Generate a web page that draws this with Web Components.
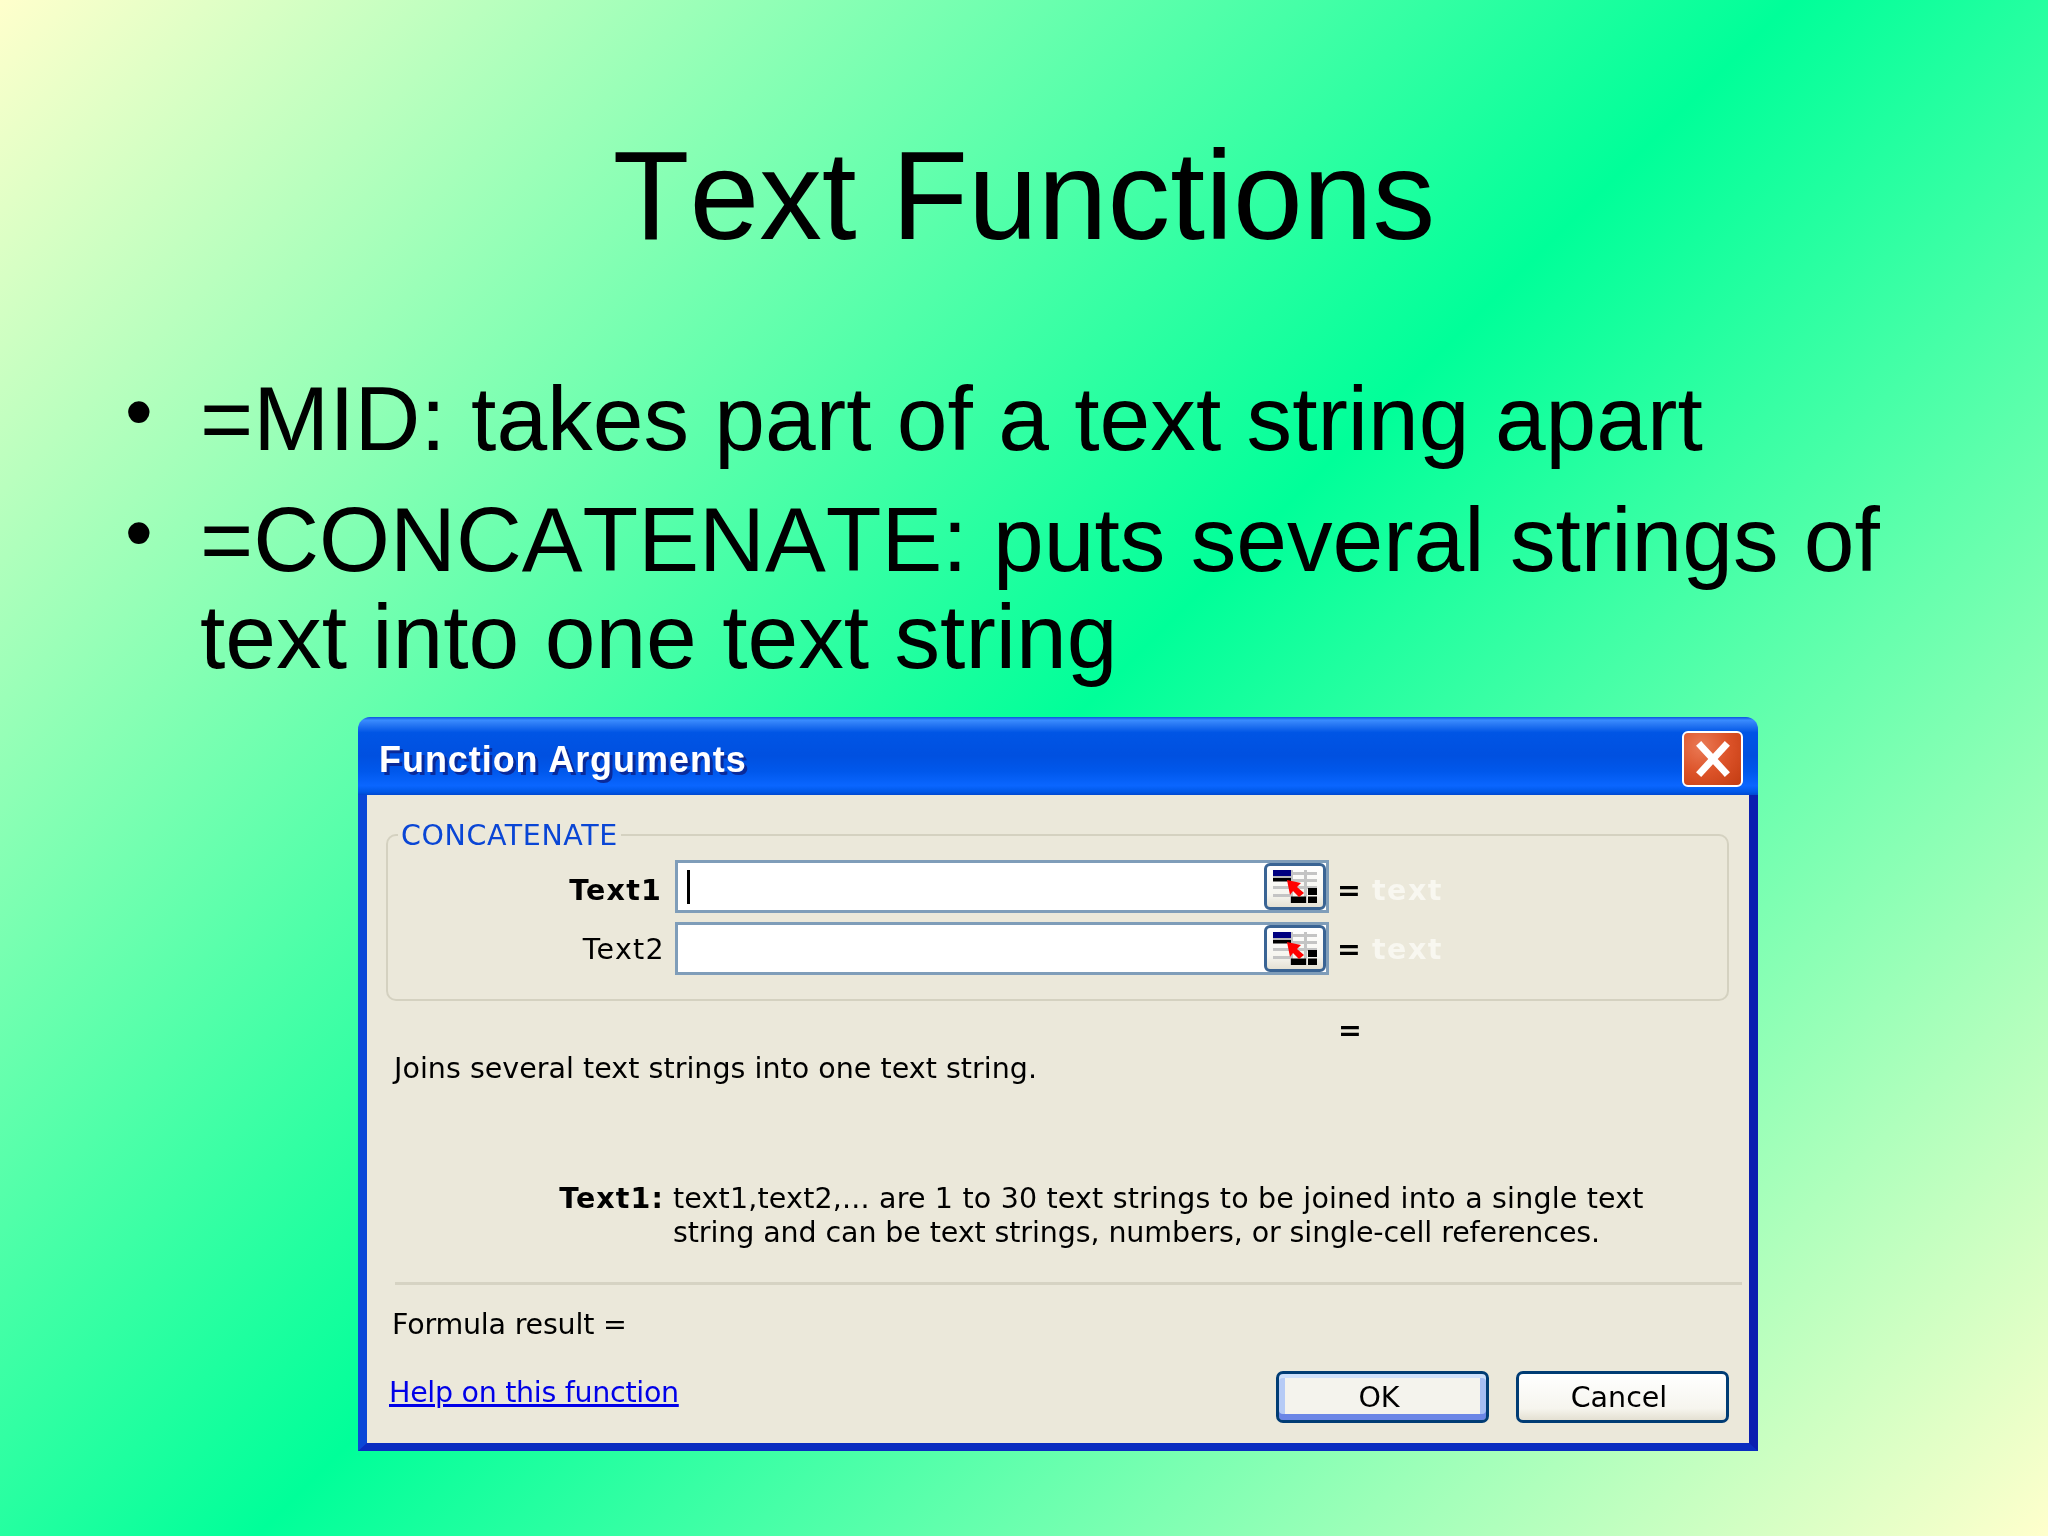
<!DOCTYPE html>
<html>
<head>
<meta charset="utf-8">
<title>Text Functions</title>
<style>
    html, body { margin: 0; padding: 0; }
</style>
</head>
<body>
<text-slide>
    <span slot="title">Text Functions</span>
    <slide-bullet>=MID: takes part of a text string apart</slide-bullet>
    <slide-bullet>=CONCATENATE: puts several strings of text into one text string</slide-bullet>
    <xp-dialog slot="dialog" caption="Function Arguments">
        <xp-groupbox legend="CONCATENATE">
            <arg-row name="Text1" bold caret></arg-row>
            <arg-row name="Text2"></arg-row>
        </xp-groupbox>
        <arg-help></arg-help>
    </xp-dialog>
</text-slide>

<script>
class TextSlide extends HTMLElement {
    constructor() {
        super();
        this.attachShadow({ mode: 'open' });
        this.shadowRoot.innerHTML = `
            <style>
                :host {
                    display: block;
                    width: 2048px;
                    height: 1536px;
                    overflow: hidden;
                    background: linear-gradient(135deg, #ffffcc 0%, #00ff99 50%, #ffffcc 100%);
                    font-family: "Liberation Sans", Arial, sans-serif;
                    font-kerning: none;
                    color: #000;
                }
                h1 {
                    margin: 0;
                    padding-top: 126px;
                    font-size: 125.4px;
                    font-weight: normal;
                    line-height: 140px;
                    text-align: center;
                }
                .bullets {
                    margin-top: 104px;
                    padding-left: 125px;
                    padding-right: 90px;
                }
                .dialog {
                    margin-top: 32px;
                    padding-left: 358px;
                }
            </style>
            <h1><slot name="title"></slot></h1>
            <div class="bullets"><slot></slot></div>
            <div class="dialog"><slot name="dialog"></slot></div>
        `;
    }
}

class SlideBullet extends HTMLElement {
    constructor() {
        super();
        this.attachShadow({ mode: 'open' });
        this.shadowRoot.innerHTML = `
            <style>
                :host {
                    display: flex;
                    font-size: 91.2px;
                    line-height: 97px;
                    margin-bottom: 24px;
                }
                .dot {
                    flex: 0 0 75px;
                    font-size: 79px;
                    margin-top: -7px;
                }
            </style>
            <span class="dot">•</span>
            <span><slot></slot></span>
        `;
    }
}

class XpDialog extends HTMLElement {
    constructor() {
        super();
        this.attachShadow({ mode: 'open' });
        const caption = this.getAttribute('caption') || '';
        this.shadowRoot.innerHTML = `
            <style>
                :host {
                    display: block;
                    width: 1400px;
                    font-family: "DejaVu Sans", sans-serif;
                    font-kerning: normal;
                    font-size: 28.5px;
                    line-height: 34px;
                    filter: blur(0.5px);
                }
                .titlebar {
                    display: flex;
                    justify-content: space-between;
                    height: 78px;
                    box-sizing: border-box;
                    padding: 14px 15px 0 21px;
                    border-radius: 12px 12px 0 0;
                    background: linear-gradient(180deg, #0a54e0 0%, #3a8cff 4%, #2a7af5 9%, #0055e5 20%, #0050e0 50%, #0058ec 70%, #0a66ff 88%, #0058e8 96%, #0048d0 100%);
                }
                .caption {
                    font-family: "Liberation Sans", Arial, sans-serif;
                    font-weight: bold;
                    font-size: 36px;
                    letter-spacing: 0.95px;
                    line-height: 58px;
                    color: #fff;
                    text-shadow: 3px 3px 0 #0a2a9a;
                }
                .close {
                    width: 61px;
                    height: 56px;
                    box-sizing: border-box;
                    border: 2px solid #fff;
                    border-radius: 6px;
                    background: radial-gradient(circle at 30% 25%, #ea7a55 0%, #dc5228 50%, #c23c12 100%);
                }
                .close svg { display: block; width: 100%; height: 100%; }
                .body {
                    display: block;
                    background: #ebe8da;
                    border-left: 9px solid #0a47d8;
                    border-right: 9px solid #0a1fb0;
                    border-bottom: 8px solid #0a2cc0;
                    padding: 39px 20px 20px 19px;
                }
                .separator {
                    height: 3px;
                    margin: 32px -13px 0 9px;
                    background: #d6d3c3;
                }
                .formula {
                    margin: 23px 0 0 6px;
                    letter-spacing: -0.2px;
                }
                .footer {
                    display: flex;
                    justify-content: space-between;
                    align-items: flex-start;
                    margin-top: 29px;
                }
                .help {
                    margin: 5px 0 0 3px;
                    color: #0000e8;
                    letter-spacing: -0.3px;
                    text-decoration: underline;
                    text-decoration-thickness: 3px;
                    text-underline-offset: 2px;
                }
                .buttons {
                    display: flex;
                    gap: 27px;
                }
            </style>
            <div class="titlebar">
                <span class="caption">${caption}</span>
                <span class="close">
                    <svg viewBox="0 0 57 52">
                        <path d="M17 13 L41 39 M41 13 L17 39" stroke="#fff" stroke-width="7" stroke-linecap="square" fill="none"/>
                    </svg>
                </span>
            </div>
            <div class="body">
                <slot></slot>
                <div class="separator"></div>
                <div class="formula">Formula result =</div>
                <div class="footer">
                    <span class="help">Help on this function</span>
                    <span class="buttons">
                        <xp-button default>OK</xp-button>
                        <xp-button>Cancel</xp-button>
                    </span>
                </div>
            </div>
        `;
    }
}

class XpGroupbox extends HTMLElement {
    constructor() {
        super();
        this.attachShadow({ mode: 'open' });
        const legend = this.getAttribute('legend') || '';
        this.shadowRoot.innerHTML = `
            <style>
                :host {
                    display: block;
                    position: relative;
                    height: 167px;
                    box-sizing: border-box;
                    border: 2px solid #d4d1c0;
                    border-radius: 10px;
                    padding-top: 24px;
                }
                .legend {
                    position: absolute;
                    left: 10px;
                    top: -17px;
                    padding: 0 3px;
                    background: #ebe8da;
                    color: #0a46d5;
                    letter-spacing: 0.6px;
                }
                .rows {
                    display: flex;
                    flex-direction: column;
                    gap: 9px;
                }
            </style>
            <span class="legend">${legend}</span>
            <div class="rows"><slot></slot></div>
        `;
    }
}

class ArgRow extends HTMLElement {
    constructor() {
        super();
        this.attachShadow({ mode: 'open' });
        const name = this.getAttribute('name') || '';
        const weight = this.hasAttribute('bold') ? 'bold' : 'normal';
        const caret = this.hasAttribute('caret') ? '<span class="caret"></span>' : '<span></span>';
        this.shadowRoot.innerHTML = `
            <style>
                :host {
                    display: grid;
                    grid-template-columns: 287px 654px 43px auto;
                    align-items: center;
                    height: 53px;
                }
                .name {
                    text-align: right;
                    padding: 2px 10px 0 0;
                    font-weight: ${weight};
                    letter-spacing: 1.3px;
                }
                :host([bold]) .name {
                    letter-spacing: 1.2px;
                    padding-right: 13px;
                }
                .eq, .value {
                    padding-top: 2px;
                }
                :host([bold]) .name, :host([bold]) .eq, :host([bold]) .value {
                    padding-top: 8px;
                }
                .field {
                    display: flex;
                    justify-content: space-between;
                    align-items: center;
                    height: 53px;
                    box-sizing: border-box;
                    border: 3px solid #7f9db9;
                    background: #fff;
                    padding-left: 9px;
                }
                .caret {
                    width: 3px;
                    height: 34px;
                    background: #000;
                }
                .eq { padding-left: 8px; font-weight: bold; }
                .value { font-weight: bold; color: #f8f7f0; letter-spacing: 1.5px; }
            </style>
            <span class="name">${name}</span>
            <span class="field">${caret}<ref-button></ref-button></span>
            <span class="eq">=</span>
            <span class="value">text</span>
        `;
    }
}

class RefButton extends HTMLElement {
    constructor() {
        super();
        this.attachShadow({ mode: 'open' });
        this.shadowRoot.innerHTML = `
            <style>
                :host {
                    display: flex;
                    align-items: center;
                    justify-content: center;
                    width: 62px;
                    height: 47px;
                    box-sizing: border-box;
                    border: 3px solid #3a6494;
                    border-radius: 6px;
                    background: linear-gradient(180deg, #ffffff 0%, #f6f5ef 70%, #e4e1d4 100%);
                }
                svg { display: block; width: 44px; height: 33px; }
            </style>
            <svg viewBox="0 0 44 33">
                <g fill="#c4c4c4">
                    <rect x="19" y="2" width="25" height="3"/>
                    <rect x="19" y="9" width="25" height="3"/>
                    <rect x="0" y="16" width="44" height="3"/>
                    <rect x="0" y="24" width="17" height="3"/>
                    <rect x="17" y="0" width="3" height="33"/>
                    <rect x="31" y="0" width="3" height="33"/>
                </g>
                <rect x="0" y="0" width="18" height="6" fill="#000080"/>
                <rect x="0" y="6" width="18" height="2" fill="#b8b8b8"/>
                <rect x="0" y="8" width="18" height="3.5" fill="#000"/>
                <rect x="35" y="18" width="9" height="7" fill="#000"/>
                <rect x="18" y="26.5" width="15" height="6.5" fill="#000"/>
                <rect x="35" y="26.5" width="9" height="6.5" fill="#000"/>
                <polygon points="14,10 28,13 24,17 31,23 26,27 20,21 17,25" fill="#f00"/>
            </svg>
        `;
    }
}

class ArgHelp extends HTMLElement {
    constructor() {
        super();
        this.attachShadow({ mode: 'open' });
        this.shadowRoot.innerHTML = `
            <style>
                :host { display: block; }
                .eq { margin: 13px 0 0 952px; font-weight: bold; }
                .desc { margin: 4px 0 0 8px; letter-spacing: 0.03px; }
                .detail {
                    display: grid;
                    grid-template-columns: 278px 1040px;
                    column-gap: 9px;
                    margin: 96px 0 0 0;
                }
                .detail b { text-align: right; letter-spacing: 1.1px; }
                .line-one { display: block; letter-spacing: 0.18px; }
                .line-two { display: block; letter-spacing: -0.1px; }
            </style>
            <div class="eq">=</div>
            <div class="desc">Joins several text strings into one text string.</div>
            <div class="detail">
                <b>Text1:</b>
                <span>
                    <span class="line-one">text1,text2,... are 1 to 30 text strings to be joined into a single text</span>
                    <span class="line-two">string and can be text strings, numbers, or single-cell references.</span>
                </span>
            </div>
        `;
    }
}

class XpButton extends HTMLElement {
    constructor() {
        super();
        this.attachShadow({ mode: 'open' });
        this.shadowRoot.innerHTML = `
            <style>
                :host {
                    display: flex;
                    align-items: center;
                    justify-content: center;
                    width: 213px;
                    height: 52px;
                    box-sizing: border-box;
                    border: 3px solid #003c74;
                    border-radius: 7px;
                    padding: 2px 7px 0 0;
                    background: linear-gradient(180deg, #ffffff 0%, #f6f5ee 75%, #e4e0d2 100%);
                }
                :host([default]) {
                    background: #f4f3ed;
                    box-shadow: inset 0 4px 0 #cee0fb, inset 0 -6px 0 #6b86e6, inset 6px 0 0 #b6cbf6, inset -6px 0 0 #a6bdf2;
                }
            </style>
            <slot></slot>
        `;
    }
}

customElements.define('xp-button', XpButton);
customElements.define('ref-button', RefButton);
customElements.define('arg-row', ArgRow);
customElements.define('arg-help', ArgHelp);
customElements.define('xp-groupbox', XpGroupbox);
customElements.define('xp-dialog', XpDialog);
customElements.define('slide-bullet', SlideBullet);
customElements.define('text-slide', TextSlide);
</script>
</body>
</html>
